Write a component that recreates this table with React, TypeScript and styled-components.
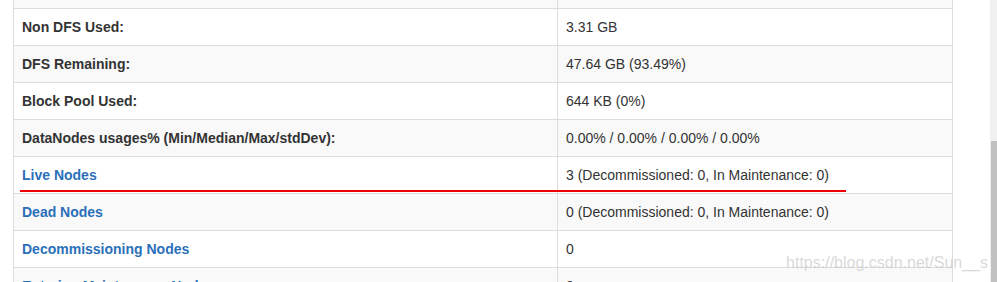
import React from 'react';
import styled, { createGlobalStyle } from 'styled-components';

const GlobalStyle = createGlobalStyle`
  html, body {
    margin: 0;
    padding: 0;
    background: #fff;
    overflow: hidden;
  }
  body {
    font-family: "Liberation Sans", Arial, sans-serif;
    font-size: 14px;
    color: #333;
  }
`;

const Window = styled.div`
  display: flex;
  width: 997px;
  height: 282px;
  overflow: hidden;
  position: relative;
`;

const Viewport = styled.div`
  flex: 1;
  height: 100%;
  overflow: hidden;
  padding-left: 13px;
`;

// the page is scrolled: the row above "Non DFS Used" is mostly out of view
const Scrolled = styled.div`
  margin-top: -29px;
`;

const Table = styled.table`
  width: 940px;
  border-collapse: collapse;
  border: 1px solid #ddd;
`;

const Row = styled.tr<{ $striped: boolean }>`
  background-color: ${(props) => (props.$striped ? '#f9f9f9' : '#fff')};
`;

const Label = styled.th`
  width: 527px;
  padding: 8px;
  line-height: 20px;
  text-align: left;
  font-weight: bold;
  border: 1px solid #ddd;
  position: relative;
`;

const Value = styled.td`
  padding: 8px;
  line-height: 20px;
  border: 1px solid #ddd;
  position: relative;
`;

const Link = styled.a`
  color: #2a6fba;
  text-decoration: none;
`;

// red marker line drawn under the "Live Nodes" row
const Marker = styled.div<{ $width: number }>`
  position: absolute;
  left: 6px;
  bottom: 1px;
  width: ${(props) => props.$width}px;
  height: 2px;
  background: #ee0000;
`;

const Scrollbar = styled.div`
  width: 6px;
  height: 100%;
  background: #f1f1f1;
  display: flex;
  flex-direction: column;
  padding-left: 1px;
`;

const Thumb = styled.div`
  margin-top: 141px;
  flex: 1;
  background: #c1c1c1;
`;

const Watermark = styled.div`
  position: absolute;
  right: 9px;
  top: 254px;
  font-size: 16px;
  color: rgba(200, 200, 200, 0.7);
  pointer-events: none;
`;

type Item = { label: string; value: string; link?: boolean; marked?: boolean };

const items: Item[] = [
  { label: 'DFS Used:', value: '2.14 MB (0%)' },
  { label: 'Non DFS Used:', value: '3.31 GB' },
  { label: 'DFS Remaining:', value: '47.64 GB (93.49%)' },
  { label: 'Block Pool Used:', value: '644 KB (0%)' },
  { label: 'DataNodes usages% (Min/Median/Max/stdDev):', value: '0.00% / 0.00% / 0.00% / 0.00%' },
  { label: 'Live Nodes', value: '3 (Decommissioned: 0, In Maintenance: 0)', link: true, marked: true },
  { label: 'Dead Nodes', value: '0 (Decommissioned: 0, In Maintenance: 0)', link: true },
  { label: 'Decommissioning Nodes', value: '0', link: true },
  { label: 'Entering Maintenance Nodes', value: '0', link: true },
];

export default function App() {
  return (
    <>
      <GlobalStyle />
      <Window>
        <Viewport>
          <Scrolled>
            <Table>
              <tbody>
                {items.map((item, i) => (
                  <Row key={item.label} $striped={i % 2 === 0}>
                    <Label>
                      {item.link ? <Link href="#">{item.label}</Link> : item.label}
                      {item.marked && <Marker $width={826} />}
                    </Label>
                    <Value>{item.value}</Value>
                  </Row>
                ))}
              </tbody>
            </Table>
          </Scrolled>
        </Viewport>
        <Scrollbar>
          <Thumb />
        </Scrollbar>
        <Watermark>https://blog.csdn.net/Sun__s</Watermark>
      </Window>
    </>
  );
}
